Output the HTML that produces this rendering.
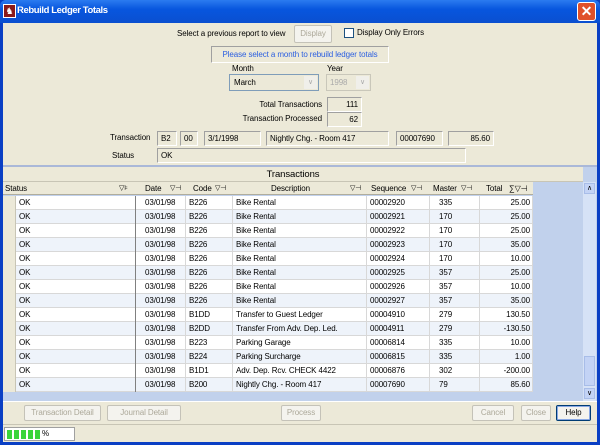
<!DOCTYPE html>
<html><head><style>
*{margin:0;padding:0;box-sizing:border-box}
body{width:600px;height:445px;overflow:hidden;background:#0a3fc4;font-family:"Liberation Sans",sans-serif;font-size:8px;letter-spacing:-0.1px;color:#000;position:relative}
.a{position:absolute}
#tb{left:0;top:0;width:600px;height:23px;background:linear-gradient(#2b7bf0,#0856de 40%,#0a4fd0);border-radius:6px 6px 0 0}
#body{left:3px;top:23px;width:594px;height:419px;background:#ece9d8}
.box{position:absolute;background:#ece9d8;border:1px solid;border-color:#a0a0a0 #fff #fff #a0a0a0;height:15px;line-height:13px;padding:0 3px;white-space:nowrap}
.btn{position:absolute;border:1px solid #c4c2b8;border-radius:2px;background:#f4f3ee;color:#aca899;text-align:center;line-height:14px;height:16px}
.cell{position:absolute;top:0;height:14px;line-height:13px;padding-left:3px;white-space:nowrap;border-right:1px solid #d8d8d8}
.row{position:absolute;left:3px;width:530px;height:14px;border-bottom:1px solid #d8d8d8}
.hd{position:absolute;top:0;height:13px;line-height:13px;white-space:nowrap}
.r{position:absolute;text-align:right;white-space:nowrap}
</style></head><body>
<div class="a" id="tb"></div>
<div class="a" style="left:3px;top:4px;width:13px;height:14px;background:#8b1a1a;border:1px solid #fff;color:#fff;font-size:9px;line-height:12px;text-align:center">♞</div>
<div class="a" style="left:17px;top:5px;color:#fff;font-weight:bold;font-size:9.5px;line-height:12px;letter-spacing:-0.4px">Rebuild Ledger Totals</div>
<div class="a" style="left:577px;top:2px;width:19px;height:19px;background:#e0502a;border:1px solid #fff;border-radius:3px;color:#fff;font-size:14px;line-height:16px;text-align:center;font-weight:bold">✕</div>
<div class="a" id="body"></div>

<div class="a" style="left:177px;top:29px">Select a previous report to view</div>
<div class="btn" style="left:294px;top:25px;width:38px;height:18px;line-height:16px">Display</div>
<div class="a" style="left:344px;top:28px;width:10px;height:10px;border:1px solid #1c5180;background:#fff"></div>
<div class="a" style="left:357px;top:28px">Display Only Errors</div>
<div class="a" style="left:211px;top:46px;width:178px;height:17px;border:1px solid;border-color:#a0a0a0 #fff #fff #a0a0a0;color:#2a5ee0;text-align:center;line-height:15px;white-space:nowrap">Please select a month to rebuild ledger totals</div>
<div class="a" style="left:232px;top:64px">Month</div>
<div class="a" style="left:327px;top:64px">Year</div>
<div class="a" style="left:229px;top:74px;width:90px;height:17px;border:1px solid #7f9db9;background:#ece9d8;line-height:15px;padding-left:4px">March<div class="a" style="right:1px;top:1px;width:13px;height:13px;background:#f0efea;color:#aaa;font-size:7px;text-align:center;line-height:13px">∨</div></div>
<div class="a" style="left:326px;top:74px;width:45px;height:17px;border:1px solid #c9c7ba;color:#aaa;line-height:15px;padding-left:3px">1998<div class="a" style="right:1px;top:1px;width:13px;height:13px;background:#f0efea;font-size:7px;text-align:center;line-height:13px">∨</div></div>
<div class="r" style="right:278px;top:100px">Total Transactions</div>
<div class="box" style="left:327px;top:97px;width:35px;text-align:right">111</div>
<div class="r" style="right:278px;top:114px">Transaction Processed</div>
<div class="box" style="left:327px;top:112px;width:35px;text-align:right">62</div>
<div class="a" style="left:110px;top:133px">Transaction</div>
<div class="box" style="left:157px;top:131px;width:20px">B2</div>
<div class="box" style="left:180px;top:131px;width:18px">00</div>
<div class="box" style="left:204px;top:131px;width:57px">3/1/1998</div>
<div class="box" style="left:266px;top:131px;width:123px">Nightly Chg. - Room 417</div>
<div class="box" style="left:396px;top:131px;width:47px">00007690</div>
<div class="box" style="left:448px;top:131px;width:46px;text-align:right">85.60</div>
<div class="a" style="left:112px;top:151px">Status</div>
<div class="box" style="left:157px;top:148px;width:309px">OK</div>
<div class="a" style="left:3px;top:165px;width:594px;height:2px;background:#aab8d8"></div>

<div class="a" style="left:3px;top:167px;width:594px;height:234px;background:#c1d1ec"></div>
<div class="a" style="left:3px;top:167px;width:580px;height:15px;background:#ece9d8;border-bottom:1px solid #c8c5b5;text-align:center;font-size:9.5px;line-height:15px">Transactions</div>
<div class="a" style="left:3px;top:182px;width:530px;height:13px;background:#ece9d8;border-bottom:1px solid #b0ad9d">
<div class="hd" style="left:2px">Status</div><div class="hd" style="left:116px;font-size:7px">▽⊧</div>
<div class="hd" style="left:142px">Date</div><div class="hd" style="left:167px;font-size:7px">▽⊣</div>
<div class="hd" style="left:190px">Code</div><div class="hd" style="left:212px;font-size:7px">▽⊣</div>
<div class="hd" style="left:268px">Description</div><div class="hd" style="left:347px;font-size:7px">▽⊣</div>
<div class="hd" style="left:368px">Sequence</div><div class="hd" style="left:408px;font-size:7px">▽⊣</div>
<div class="hd" style="left:430px">Master</div><div class="hd" style="left:458px;font-size:7px">▽⊣</div>
<div class="hd" style="left:483px">Total</div><div class="hd" style="left:506px;font-size:8px">∑▽⊣</div>
</div>
<div id="rows"></div>
<div class="a" style="left:583px;top:182px;width:13px;height:219px;background:#d6e2f6"></div>
<div class="a" style="left:584px;top:183px;width:11px;height:11px;background:#c3d3f5;border:1px solid #a8bde8;font-size:7px;text-align:center;line-height:9px">∧</div>
<div class="a" style="left:584px;top:356px;width:11px;height:30px;background:#c3d3f5;border:1px solid #a8bde8"></div>
<div class="a" style="left:584px;top:388px;width:11px;height:11px;background:#c3d3f5;border:1px solid #a8bde8;font-size:7px;text-align:center;line-height:9px">∨</div>

<div class="a" style="left:3px;top:401px;width:594px;height:1px;background:#fff"></div>
<div class="btn" style="left:24px;top:405px;width:77px">Transaction Detail</div>
<div class="btn" style="left:107px;top:405px;width:74px">Journal Detail</div>
<div class="btn" style="left:281px;top:405px;width:40px">Process</div>
<div class="btn" style="left:472px;top:405px;width:42px">Cancel</div>
<div class="btn" style="left:521px;top:405px;width:30px">Close</div>
<div class="btn" style="left:556px;top:405px;width:35px;color:#000;border:1px solid #003c74;box-shadow:inset 0 0 0 1px #8aa8e4;background:#f4f3ee">Help</div>
<div class="a" style="left:3px;top:424px;width:594px;height:1px;background:#c8c5b5"></div>
<div class="a" style="left:4px;top:427px;width:71px;height:14px;background:#fff;border:1px solid #a0a0a0">
<div class="a" style="left:2px;top:2px;width:5px;height:9px;background:#3ad43a"></div>
<div class="a" style="left:9px;top:2px;width:5px;height:9px;background:#3ad43a"></div>
<div class="a" style="left:16px;top:2px;width:5px;height:9px;background:#3ad43a"></div>
<div class="a" style="left:23px;top:2px;width:5px;height:9px;background:#3ad43a"></div>
<div class="a" style="left:30px;top:2px;width:5px;height:9px;background:#3ad43a"></div>
<div class="a" style="left:37px;top:1px;font-size:8px">%</div>
</div>
<script>
var d=[["03/01/98","B226","Bike Rental","00002920","335","25.00"],
["03/01/98","B226","Bike Rental","00002921","170","25.00"],
["03/01/98","B226","Bike Rental","00002922","170","25.00"],
["03/01/98","B226","Bike Rental","00002923","170","35.00"],
["03/01/98","B226","Bike Rental","00002924","170","10.00"],
["03/01/98","B226","Bike Rental","00002925","357","25.00"],
["03/01/98","B226","Bike Rental","00002926","357","10.00"],
["03/01/98","B226","Bike Rental","00002927","357","35.00"],
["03/01/98","B1DD","Transfer to Guest Ledger","00004910","279","130.50"],
["03/01/98","B2DD","Transfer From Adv. Dep. Led.","00004911","279","-130.50"],
["03/01/98","B223","Parking Garage","00006814","335","10.00"],
["03/01/98","B224","Parking Surcharge","00006815","335","1.00"],
["03/01/98","B1D1","Adv. Dep. Rcv. CHECK 4422","00006876","302","-200.00"],
["03/01/98","B200","Nightly Chg. - Room 417","00007690","79","85.60"]];
var h="";
for(var i=0;i<d.length;i++){var r=d[i],t=196+i*14;
h+='<div class="row" style="top:'+t+'px;background:'+(i%2?'#eef3fa':'#fff')+'">'+
'<div class="cell" style="left:0;width:13px;background:#ece9d8;border-right:1px solid #c8c5b5"></div>'+
'<div class="cell" style="left:13px;width:120px;border-right:1px solid #808080">OK</div>'+
'<div class="cell" style="left:133px;width:50px;padding-left:9px">'+r[0]+'</div>'+
'<div class="cell" style="left:183px;width:47px">'+r[1]+'</div>'+
'<div class="cell" style="left:230px;width:134px">'+r[2]+'</div>'+
'<div class="cell" style="left:364px;width:63px">'+r[3]+'</div>'+
'<div class="cell" style="left:427px;width:50px;padding-left:9px">'+r[4]+'</div>'+
'<div class="cell" style="left:477px;width:53px;text-align:right;padding-right:2px">'+r[5]+'</div></div>';}
document.getElementById("rows").innerHTML=h;
</script>
</body></html>
